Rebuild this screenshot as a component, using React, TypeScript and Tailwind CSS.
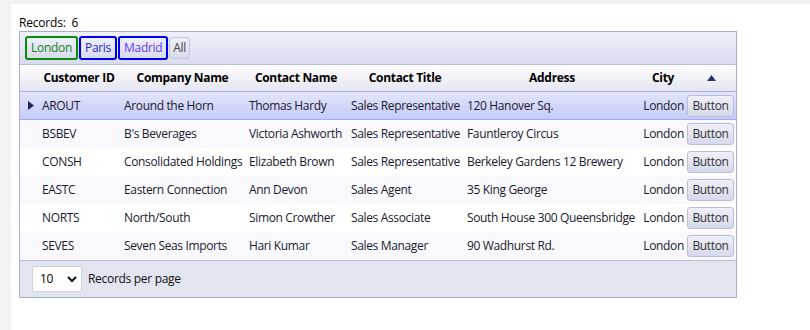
import React from 'react';

const rows = [
  { id: 'AROUT', company: 'Around the Horn', contact: 'Thomas Hardy', title: 'Sales Representative', address: '120 Hanover Sq.', city: 'London' },
  { id: 'BSBEV', company: "B's Beverages", contact: 'Victoria Ashworth', title: 'Sales Representative', address: 'Fauntleroy Circus', city: 'London' },
  { id: 'CONSH', company: 'Consolidated Holdings', contact: 'Elizabeth Brown', title: 'Sales Representative', address: 'Berkeley Gardens 12 Brewery', city: 'London' },
  { id: 'EASTC', company: 'Eastern Connection', contact: 'Ann Devon', title: 'Sales Agent', address: '35 King George', city: 'London' },
  { id: 'NORTS', company: 'North/South', contact: 'Simon Crowther', title: 'Sales Associate', address: 'South House 300 Queensbridge', city: 'London' },
  { id: 'SEVES', company: 'Seven Seas Imports', contact: 'Hari Kumar', title: 'Sales Manager', address: '90 Wadhurst Rd.', city: 'London' },
];

const cols = 'grid grid-cols-[18px_82px_125px_102px_116px_178px_44px_52px]';

export default function App() {
  return (
    <div className="min-h-[330px] bg-[#f3f3f3] pt-[4px] pl-[11px] font-['Open_Sans',sans-serif] text-[12px]">
      <div className="min-h-[326px] bg-white pl-[8px] pt-[11px]">
        <div className="text-black leading-[16px] tracking-[-0.2px]">Records:&nbsp; 6</div>

        <div className="w-[718px] border border-[#a9aed6] bg-white">
          {/* Toolbar */}
          <div className="flex h-[33px] items-center gap-[1px] border-b border-[#b8bde0] bg-gradient-to-b from-[#eef0fa] to-[#d9dcee] px-[5px] tracking-[-0.3px]">
            <button className="h-[24px] rounded-[3px] border-2 border-[#0a8a0a] bg-gradient-to-b from-[#eef0f9] to-[#d8dbec] px-[4px] text-[#178017]">London</button>
            <button className="h-[24px] rounded-[3px] border-2 border-[#0000f0] bg-gradient-to-b from-[#eef0f9] to-[#d8dbec] px-[4px] text-[#2626c8]">Paris</button>
            <button className="h-[24px] rounded-[3px] border-2 border-[#0000f0] bg-gradient-to-b from-[#eef0f9] to-[#d8dbec] px-[4px] text-[#6a3cf0]">Madrid</button>
            <button className="h-[22px] rounded-[3px] border border-[#c4c7dc] bg-gradient-to-b from-[#eef0f9] to-[#d8dbec] px-[3px] text-[#444]">All</button>
          </div>

          {/* Header */}
          <div className={`${cols} h-[27px] items-center border-b border-[#a9b0e4] bg-gradient-to-b from-white to-[#e4e5ef] font-bold text-black tracking-[-0.3px]`}>
            <div />
            <div className="text-center">Customer ID</div>
            <div className="text-center">Company Name</div>
            <div className="text-center">Contact Name</div>
            <div className="text-center">Contact Title</div>
            <div className="text-center">Address</div>
            <div className="text-center">City</div>
            <div className="flex justify-center">
              <svg width="9" height="6" viewBox="0 0 9 6"><path d="M0 6 L4.5 0 L9 6 Z" fill="#2a3570" /></svg>
            </div>
          </div>

          {/* Rows */}
          {rows.map((r, i) => (
            <div
              key={r.id}
              className={`${cols} h-[28px] items-center whitespace-nowrap text-[#1a1a2e] tracking-[-0.35px] ${
                i === 0
                  ? 'border-b border-[#a5acf0] bg-gradient-to-b from-[#e2e5fb] to-[#c6cbf6]'
                  : i % 2 === 1
                  ? 'bg-[#f9f9fd]'
                  : 'bg-white'
              }`}
            >
              <div className="flex justify-center pl-[4px]">
                {i === 0 && (
                  <svg width="6" height="9" viewBox="0 0 6 9"><path d="M0 0 L6 4.5 L0 9 Z" fill="#1c2660" /></svg>
                )}
              </div>
              <div className="overflow-hidden pl-[4px]">{r.id}</div>
              <div className="overflow-hidden pl-[4px]">{r.company}</div>
              <div className="overflow-hidden pl-[4px]">{r.contact}</div>
              <div className="overflow-hidden pl-[4px]">{r.title}</div>
              <div className="overflow-hidden pl-[4px]">{r.address}</div>
              <div className="overflow-hidden pr-[1px] text-right">{r.city}</div>
              <div className="pl-[2px]">
                <button className="h-[22px] w-[47px] rounded-[3px] border border-[#b9bdd9] bg-gradient-to-b from-[#eff0f8] to-[#d6d9eb] text-[#333]">Button</button>
              </div>
            </div>
          ))}

          {/* Footer */}
          <div className="flex h-[37px] items-center gap-[6px] border-t border-[#b8bde0] bg-[#e2e4f0] pl-[12px] tracking-[-0.3px]">
            <div className="flex h-[26px] w-[50px] items-center justify-between rounded-[2px] border border-[#cfd1dc] bg-white pl-[7px] pr-[4px] text-black">
              <span>10</span>
              <svg width="10" height="7" viewBox="0 0 10 7"><path d="M1 1 L5 5 L9 1" stroke="#111" strokeWidth="2" fill="none" /></svg>
            </div>
            <span className="text-[#111]">Records per page</span>
          </div>
        </div>
      </div>
    </div>
  );
}
